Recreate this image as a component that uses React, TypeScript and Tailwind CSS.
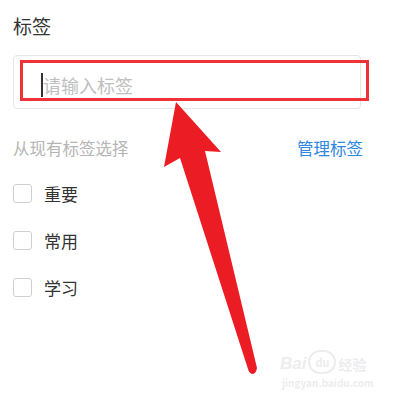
import React from "react";

const tags = ["重要", "常用", "学习"];

function Arrow() {
  return (
    <svg
      className="absolute inset-0 pointer-events-none"
      width="395"
      height="402"
      viewBox="0 0 395 402"
    >
      <path
        d="M176 102 L221 152 L205 151 L257 368 Q256 374 252 374 Q249 373 248 369 L180 158 L164 167 Z"
        fill="#ec1c24"
      />
    </svg>
  );
}

function Watermark() {
  return (
    <div className="absolute left-[280px] top-[350px] flex flex-col items-start text-[#ededed] pointer-events-none">
      <div className="flex items-end gap-[2px]">
        <span className="text-[17px] leading-[20px] font-bold italic" style={{ fontFamily: "Arial, sans-serif" }}>
          Bai
        </span>
        <span className="w-[28px] h-[24px] rounded-full border-2 border-[#ededed] flex items-center justify-center text-[11px] font-bold">
          du
        </span>
        <span className="text-[14px] leading-[20px] font-bold">经验</span>
      </div>
      <span className="text-[10px] leading-[12px] mt-[3px] ml-[2px] font-bold">jingyan.baidu.com</span>
    </div>
  );
}

export default function App() {
  return (
    <div
      className="relative w-[395px] h-[402px] overflow-hidden bg-white pl-[13px] pt-[13px]"
      style={{ fontFamily: '"Noto Sans CJK SC", "Noto Sans", sans-serif' }}
    >
      {/* Title */}
      <div className="text-[19px] leading-[26px] text-[#333]">标签</div>

      {/* Input */}
      <div className="mt-[16px] w-[348px] h-[54px] rounded-[4px] border border-[#e6e6e6] flex items-center pl-[27px]">
        <span className="w-[2px] h-[24px] bg-[#333] mt-[6px]" />
        <span className="text-[18px] text-[#c0c0c0] mt-[6px]">请输入标签</span>
      </div>

      {/* Choose label row */}
      <div className="mt-[27px] w-[350px] h-[24px] flex items-center justify-between text-[16.5px]">
        <span className="text-[#b5b5b5]">从现有标签选择</span>
        <span className="text-[#2f88e0]">管理标签</span>
      </div>

      {/* Tags */}
      <div className="mt-[10px] flex flex-col">
        {tags.map((t) => (
          <div key={t} className="h-[47px] flex items-center gap-[12px]">
            <span className="w-[19px] h-[19px] rounded-[3px] border border-[#cfcfcf] bg-white" />
            <span className="text-[17px] text-[#333]">{t}</span>
          </div>
        ))}
      </div>

      {/* Red highlight box */}
      <div className="absolute left-[20px] top-[60px] w-[349px] h-[41px] border-[3px] border-[#ee3237] pointer-events-none" />

      <Watermark />
      <Arrow />
    </div>
  );
}
